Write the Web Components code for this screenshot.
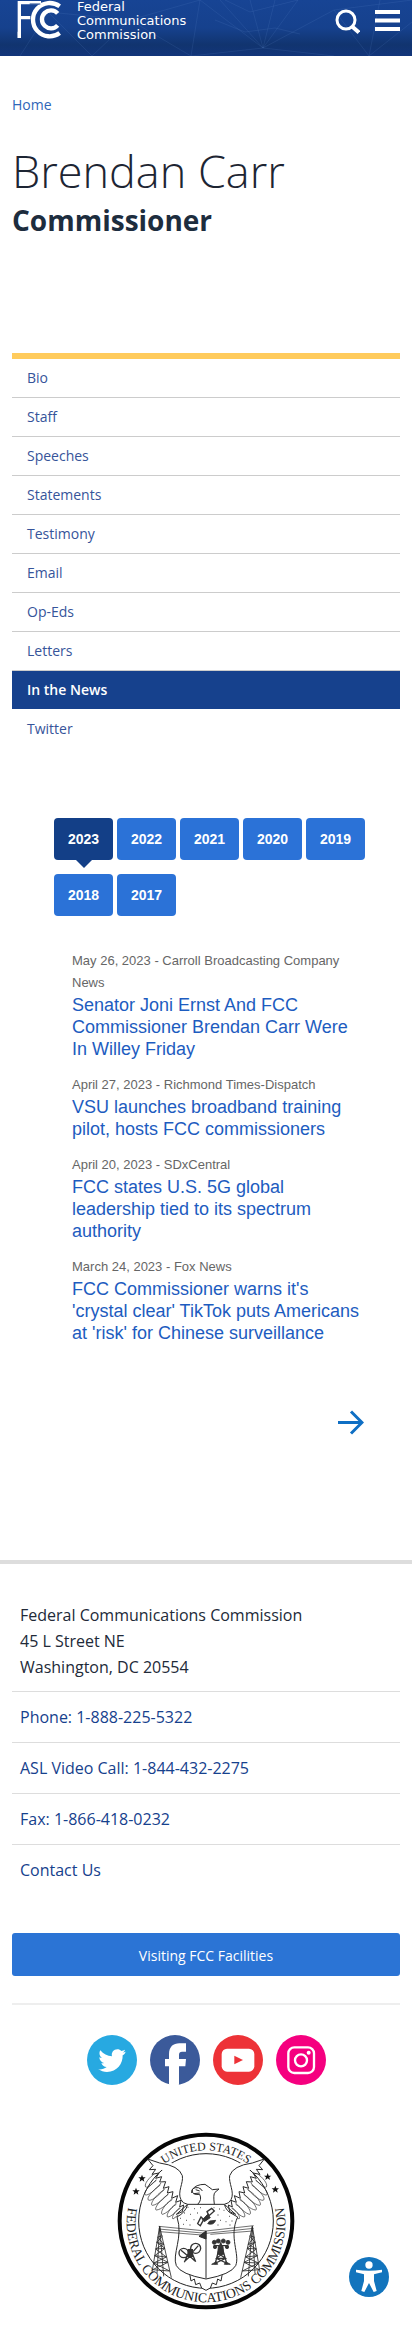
<!DOCTYPE html>
<html lang="en">
<head>
<meta charset="utf-8">
<meta name="viewport" content="width=device-width, initial-scale=1">
<title>Brendan Carr - In the News | Federal Communications Commission</title>
<style>
  body { margin: 0; background: #fff; color: #212c3b; font: 14px/20px "Open Sans", "Noto Sans", sans-serif; }
  main { display: block; padding: 38px 12px 0; }
</style>
</head>
<body>
<fcc-header></fcc-header>
<main>
  <fcc-page-title>
    <a slot="crumb" href="#home">Home</a>
    <span slot="name">Brendan Carr</span>
    <span slot="role">Commissioner</span>
  </fcc-page-title>
  <fcc-side-nav>
    <fcc-nav-item>Bio</fcc-nav-item>
    <fcc-nav-item>Staff</fcc-nav-item>
    <fcc-nav-item>Speeches</fcc-nav-item>
    <fcc-nav-item>Statements</fcc-nav-item>
    <fcc-nav-item>Testimony</fcc-nav-item>
    <fcc-nav-item>Email</fcc-nav-item>
    <fcc-nav-item>Op-Eds</fcc-nav-item>
    <fcc-nav-item>Letters</fcc-nav-item>
    <fcc-nav-item current>In the News</fcc-nav-item>
    <fcc-nav-item>Twitter</fcc-nav-item>
  </fcc-side-nav>
  <fcc-news>
    <fcc-year-tab slot="years" current>2023</fcc-year-tab>
    <fcc-year-tab slot="years">2022</fcc-year-tab>
    <fcc-year-tab slot="years">2021</fcc-year-tab>
    <fcc-year-tab slot="years">2020</fcc-year-tab>
    <fcc-year-tab slot="years">2019</fcc-year-tab>
    <fcc-year-tab slot="years">2018</fcc-year-tab>
    <fcc-year-tab slot="years">2017</fcc-year-tab>
    <fcc-news-item><span slot="meta">May 26, 2023 - Carroll Broadcasting Company News</span>Senator Joni Ernst And FCC Commissioner Brendan Carr Were In Willey Friday</fcc-news-item>
    <fcc-news-item><span slot="meta">April 27, 2023 - Richmond Times-Dispatch</span>VSU launches broadband training pilot, hosts FCC commissioners</fcc-news-item>
    <fcc-news-item><span slot="meta">April 20, 2023 - SDxCentral</span>FCC states U.S. 5G global leadership tied to its spectrum authority</fcc-news-item>
    <fcc-news-item><span slot="meta">March 24, 2023 - Fox News</span>FCC Commissioner warns it's 'crystal clear' TikTok puts Americans at 'risk' for Chinese surveillance</fcc-news-item>
  </fcc-news>
</main>
<fcc-footer>
  <fcc-social slot="social"></fcc-social>
  <fcc-seal slot="seal"></fcc-seal>
</fcc-footer>
<fcc-access></fcc-access>

<script>
const define = (name, html) => {
  const template = document.createElement('template');
  template.innerHTML = '<style>*{box-sizing:border-box}a{text-decoration:none}svg{display:block}</style>' + html;
  customElements.define(name, class extends HTMLElement {
    constructor() {
      super();
      this.attachShadow({ mode: 'open' }).append(template.content.cloneNode(true));
    }
  });
};

define('fcc-header', `
<style>
  :host { display: block; }
  header { display: flex; align-items: flex-start; height: 56px; padding: 0 12px 0 17px; overflow: hidden;
    background: linear-gradient(#174494 0, #16418d 50%, #11346f 80%, #12357a 100%); position: relative; }
  .web { position: absolute; inset: 0; width: 100%; height: 100%; }
  .brand { display: flex; gap: 13px; color: #fff; position: relative; font: 13px/14px "DejaVu Sans", sans-serif; }
  .brand span { display: block; }
  .tools { margin-left: auto; display: flex; gap: 15px; padding-top: 7px; position: relative; }
  button { border: 0; background: none; padding: 0; display: block; }
</style>
<header>
  <svg class="web" viewBox="0 0 412 56" preserveAspectRatio="xMidYMid slice" fill="none" stroke="#6c93d6" stroke-opacity=".14" aria-hidden="true">
    <path d="M263 48L191 56M263 48L200 0M263 48L220 0M263 48L250 0M263 48L275 0M263 48L298 0M263 48L334 10L412 0M263 48L334 56M215 20L245 32L275 28L300 34M20 56L48 12L92 56L130 20L191 56M334 10L369 56M191 56L200 0M380 0L369 56L412 22"/>
    <path d="M225 0L250 12L298 0M130 20L200 0M48 12L130 20"/>
  </svg>
  <a class="brand" href="#home" aria-label="FCC home">
    <svg width="47" height="40" viewBox="22 0 141 120" fill="none" stroke="#fff">
      <path d="M29 114V8H94M29 53H62" stroke-width="10"/>
      <path d="M24 114V95H34V106Z" fill="#fff" stroke="none"/>
      <path d="M150 19A50 50 0 1 0 150 99" stroke-width="13"/>
      <path d="M144 40A27 27 0 1 0 144 76" stroke-width="13"/>
      <path d="M60 12H92" stroke="#16418d" stroke-width="3"/>
    </svg>
    <span>Federal<br>Communications<br>Commission</span>
  </a>
  <div class="tools">
    <button type="button" aria-label="Search"><svg width="25" height="27" viewBox="0 0 25 27" fill="none" stroke="#fff" stroke-width="4"><circle cx="11" cy="13" r="9" stroke-width="3"/><path d="M16.500 19L24 25.500"/></svg></button>
    <button type="button" aria-label="Menu"><svg width="25" height="24" viewBox="0 0 25 24" fill="#fff"><path d="M0 1h25v4H0zM0 9.500h25v4H0zM0 18h25v4H0z"/></svg></button>
  </div>
</header>`);

define('fcc-page-title', `
<style>
  :host { display: block; }
  ::slotted(a) { color: #2f66b8; text-decoration: none; }
  nav { height: 22px; line-height: 22px; }
  h1 { margin: 24px 0 0; font-size: 45px; font-weight: 300; line-height: 62px; color: #1d2533; }
  h2 { margin: 0; font-size: 28px; font-weight: 700; line-height: 36px; color: #1d2d3e; }
</style>
<nav aria-label="Breadcrumb"><slot name="crumb"></slot></nav>
<h1><slot name="name"></slot></h1>
<h2><slot name="role"></slot></h2>`);

define('fcc-side-nav', `
<style>
  :host { display: block; margin-top: 115px; border-top: 6px solid #ffcb5c; }
</style>
<nav aria-label="Commissioner pages"><slot></slot></nav>`);

define('fcc-nav-item', `
<style>
  :host { display: block; border-bottom: 1px solid #ccc; }
  :host(:last-child) { border-bottom-color: transparent; }
  a { display: block; padding: 0 15px; line-height: 38px; color: #36549a; }
  :host([current]) { background: #16418d; color: #fff; font-weight: 600; border-bottom-color: #fff; }
  :host([current]) a { color: inherit; }
</style>
<a href="#page"><slot></slot></a>`);

define('fcc-news', `
<style>
  :host { display: block; padding: 69px 30px 0 42px; font-family: "Liberation Sans", Arial, sans-serif; }
  .years { display: flex; flex-wrap: wrap; gap: 14px 4px; }
  .list { display: flex; flex-direction: column; gap: 14px; padding: 34px 8px 0 18px; }
  .more { display: flex; justify-content: flex-end; padding: 64px 6px 0 0; }
</style>
<div class="years"><slot name="years"></slot></div>
<div class="list"><slot></slot></div>
<div class="more"><a href="#next" aria-label="Next page"><svg width="27" height="28" viewBox="0 0 27 28" fill="none" stroke="#0f6fc4" stroke-width="3"><path d="M1 14.500H25M14 3.500L25 14.500L14 25.500"/></svg></a></div>`);

define('fcc-year-tab', `
<style>
  :host { display: block; position: relative; }
  button { display: block; width: 59px; height: 42px; border: 0; border-radius: 4px; background: #2b72d7; color: #fff; font: bold 14px/20px "Liberation Sans", Arial, sans-serif; padding: 0; }
  :host([current]) button { background: #133f87; }
  :host([current])::after { content: ""; position: absolute; top: 100%; left: 50%; margin-left: -8px; border: 8px solid transparent; border-top-color: #133f87; border-bottom: 0; }
</style>
<button type="button"><slot></slot></button>`);

define('fcc-news-item', `
<style>
  :host { display: block; }
  p { margin: 0; font-size: 13px; line-height: 22px; color: #666; }
  h3 { margin: 0; font-size: 18px; font-weight: 400; line-height: 22px; }
  a { color: #1d5cc0; }
</style>
<article><p><slot name="meta"></slot></p><h3><a href="#story"><slot></slot></a></h3></article>`);

define('fcc-footer', `
<style>
  :host { display: block; margin-top: 124px; border-top: 4px solid #ddd; }
  footer { padding: 38px 12px 16px; font-size: 16px; line-height: 26px; }
  address { font-style: normal; padding: 0 8px 11px; color: #222a38; }
  .line { display: block; padding: 12px 8px; border-top: 1px solid #ddd; color: #16418d; }
  .visit { display: block; margin-top: 38px; border-radius: 3px; background: #2b74d5; color: #fff; font-size: 14px; line-height: 41px; text-align: center; padding-top: 2px; }
  hr { border: 0; border-top: 2px solid #eee; margin: 27px 0 30px; }
</style>
<footer>
  <address>Federal Communications Commission<br>45 L Street NE<br>Washington, DC 20554</address>
  <a class="line" href="tel:18882255322">Phone: 1-888-225-5322</a>
  <a class="line" href="tel:18444322275">ASL Video Call: 1-844-432-2275</a>
  <a class="line" href="tel:18664180232">Fax: 1-866-418-0232</a>
  <a class="line" href="#contact">Contact Us</a>
  <a class="visit" href="#visit">Visiting FCC Facilities</a>
  <hr>
  <slot name="social"></slot>
  <slot name="seal"></slot>
</footer>`);

define('fcc-social', `
<style>
  :host { display: flex; justify-content: center; gap: 13px; }
  svg { width: 50px; height: 50px; }
</style>
<a href="#twitter" aria-label="Twitter"><svg viewBox="0 0 150 150"><circle cx="75" cy="75" r="75" fill="#27a9e1"/><path fill="#fff" d="M116 50c-3 1-6 2-9 3 3-2 6-5 7-9-3 2-7 3-11 4-3-3-7-5-12-5-11 0-19 10-16 21-14-1-26-7-35-18-5 8-2 18 5 23-3 0-5-1-8-2 0 8 6 15 14 17-2 1-5 1-8 0 2 7 8 12 16 12-7 5-15 8-25 7 8 5 16 8 26 8 30 0 48-25 47-50 4-2 7-6 9-11z"/></svg></a>
<a href="#facebook" aria-label="Facebook"><svg viewBox="0 0 150 150"><circle cx="75" cy="75" r="75" fill="#3b5a9a"/><path fill="#fff" d="M57 149V94H45V72H57V58C57 35 70 25 88 25H108V50H96C90 50 87 53 87 59V72H108L106 94H87V149Q72 152 57 149Z"/></svg></a>
<a href="#youtube" aria-label="YouTube"><svg viewBox="0 0 150 150"><circle cx="75" cy="75" r="75" fill="#ed3237"/><rect x="26" y="41" width="98" height="69" rx="16" fill="#fff"/><path d="M64 62L90 75L64 88Z" fill="#ed3237"/></svg></a>
<a href="#instagram" aria-label="Instagram"><svg viewBox="0 0 150 150"><circle cx="75" cy="75" r="75" fill="#f5007f"/><g fill="none" stroke="#fff" stroke-width="7"><rect x="37" y="37" width="77" height="77" rx="18"/><circle cx="75" cy="76" r="18"/></g><circle cx="98" cy="53" r="6" fill="#fff"/></svg></a>`);

define('fcc-seal', `
<style>
  :host { display: flex; justify-content: center; padding-top: 47px; }
  svg { width: 178px; height: 178px; }
  text { font-family: "Liberation Serif", "Times New Roman", serif; fill: #222; }
</style>
<svg viewBox="50 37 534 534" role="img" aria-label="Seal of the Federal Communications Commission">
  <defs>
    <path id="top" d="M105 304A212 212 0 0 1 529 304"/>
    <path id="bottom" d="M91 235A238 238 0 1 0 543 235"/>
    <path id="star" d="M0-11L3-3H11L5 2L7 10L0 5L-7 10L-5 2L-11-3H-3Z"/>
    <g id="wing">
      <path d="M142 118L178 130Q236 138 246 168C250 190 230 218 242 240Q246 251 262 254"/>
      <path d="M142 118L158 138L147 150L166 149L155 164L176 160L166 176L184 171L178 187L196 186L189 206L206 201L201 220L218 216L214 236L232 228L226 248L242 242L238 262L250 256L246 276L228 284L262 254" stroke-width="3"/>
      <path stroke-width="2" d="M160 164C138 182 132 196 136 202C142 206 160 190 168 180M168 182C136 205 126 226 138 226C150 224 170 206 182 190M180 196C150 216 136 240 146 242C160 242 180 222 192 208M192 210C160 230 148 256 156 257C170 256 190 238 204 222M204 224C174 244 160 270 168 271C184 270 200 252 214 238M216 240C190 254 178 282 186 284C198 282 216 264 228 250M228 254C208 264 196 288 202 292C212 292 228 276 238 264M240 266C224 272 212 294 218 298L234 286"/>
    </g>
    <g id="tower" stroke-width="2.500">
      <path d="M178 320L155 458M178 320L213 474M178 320L170 462M178 320L190 470M176 332H182M172 352L186 348M169 368L190 374M166 388L194 386M163 408L198 412M160 430L203 428M157 450L208 454M172 352L190 374L166 388L198 412L160 430L208 454M186 350L169 368L194 386L163 408L203 428L157 450"/>
    </g>
  </defs>
  <circle cx="317" cy="304" r="259" fill="#fff" stroke="#050505" stroke-width="12"/>
  <circle cx="317" cy="304" r="202" fill="none" stroke="#222" stroke-width="3"/>
  <g fill="#fff" stroke="#2a2a2a" stroke-width="3" stroke-linejoin="round">
    <path stroke="none" d="M142 118L178 130L217 130L190 154Z M492 118L456 130L417 130L444 154Z"/>
    <g fill="none"><use href="#wing"/><use href="#wing" transform="matrix(-1 0 0 1 634 0)"/>
    <use href="#tower"/><use href="#tower" transform="matrix(-1 0 0 1 634 0)"/></g>
    <path d="M268 462L272 484L282 478L286 495L298 490L304 505L317 512L330 505L336 490L348 495L352 478L362 484L366 462"/>
    <path d="M262 254H372Q378 276 398 284L412 292C384 352 420 404 406 438Q392 464 317 478Q242 464 228 438C214 404 250 352 230 292Q256 278 262 254Z"/>
    <path d="M175 320L317 334L460 318M175 328L317 341L460 326M178 336L305 346M330 344L458 334" fill="none" stroke-width="2"/>
    <path d="M317 334V476" fill="none"/>
    <path d="M296 350L317 334V358Z" fill="#333"/>
    <path d="M292 254Q306 240 298 224Q286 226 280 222Q274 218 276 210Q286 194 314 194Q326 202 336 210L356 208L344 218Q338 224 342 254M274 220Q272 202 294 204Q304 208 306 214M286 210L298 214M280 222L298 220" fill="none"/>
  </g>
  <g stroke="#333" stroke-width="2.500" fill="#333">
    <path d="M262 263h2M282 267h2M300 264h2M340 264h2M356 268h2M252 280h2M270 284h2M290 280h2M352 286h2M370 272h2M386 290h2M240 296h2M258 302h2M280 300h2M360 302h2M376 306h2M394 304h2M248 314h2M268 316h2M352 316h2M388 316h2" stroke-width="4"/>
    <path d="M292 312L302 292L310 300L300 318ZM320 276L334 266L342 274L326 288Z" fill="#fff" stroke-width="4"/>
    <path d="M306 300L322 284L330 294L312 306ZM322 312Q340 318 346 302L328 304Z"/>
    <circle cx="250" cy="400" r="14" fill="none" stroke-width="4"/><circle cx="286" cy="386" r="15" fill="none" stroke-width="4"/>
    <path d="M242 392L262 408M278 396L294 378" stroke-width="4"/>
    <path d="M270 388L252 428M270 388L286 426M260 410H278M262 404L284 424M276 404L254 424M264 390H276V410H264Z" stroke-width="4"/>
    <path d="M361 368L344 434M361 368L380 434M352 400H370M348 416H376M352 400L376 416L346 430M370 400L348 416L378 430M340 378H384" stroke-width="4" fill="none"/>
    <path d="M354 380H368L370 404H352ZM334 434H352L348 426ZM390 434H372L376 426Z"/>
    <g><circle cx="342" cy="368" r="6"/><circle cx="354" cy="364" r="6"/><circle cx="369" cy="364" r="6"/><circle cx="383" cy="368" r="6"/><circle cx="344" cy="382" r="5"/><circle cx="380" cy="382" r="5"/></g>
  </g>
  <g fill="#111"><use href="#star" x="125" y="176"/><use href="#star" x="107" y="215"/><use href="#star" x="502" y="171"/><use href="#star" x="525" y="209"/></g>
  <text font-size="36" text-anchor="middle"><textPath href="#top" startOffset="50%">UNITED STATES</textPath></text>
  <text font-size="41" text-anchor="middle"><textPath href="#bottom" startOffset="50%">FEDERAL COMMUNICATIONS COMMISSION</textPath></text>
</svg>`);

define('fcc-access', `
<style>
  :host { position: fixed; right: 23px; bottom: 29px; }
  button { display: block; border: 0; padding: 0; background: none; border-radius: 50%; }
</style>
<button type="button" aria-label="Accessibility options"><svg width="40" height="40" viewBox="0 0 120 120"><circle cx="60" cy="60" r="60" fill="#1274bd"/><circle cx="60" cy="24" r="11" fill="#fff"/><path fill="#fff" d="M21 38Q60 44 99 38V46L75 52V72L83 102L74 105L60 78L46 105L37 102L45 72V52L21 46Z"/></svg></button>`);
</script>
</body>
</html>
